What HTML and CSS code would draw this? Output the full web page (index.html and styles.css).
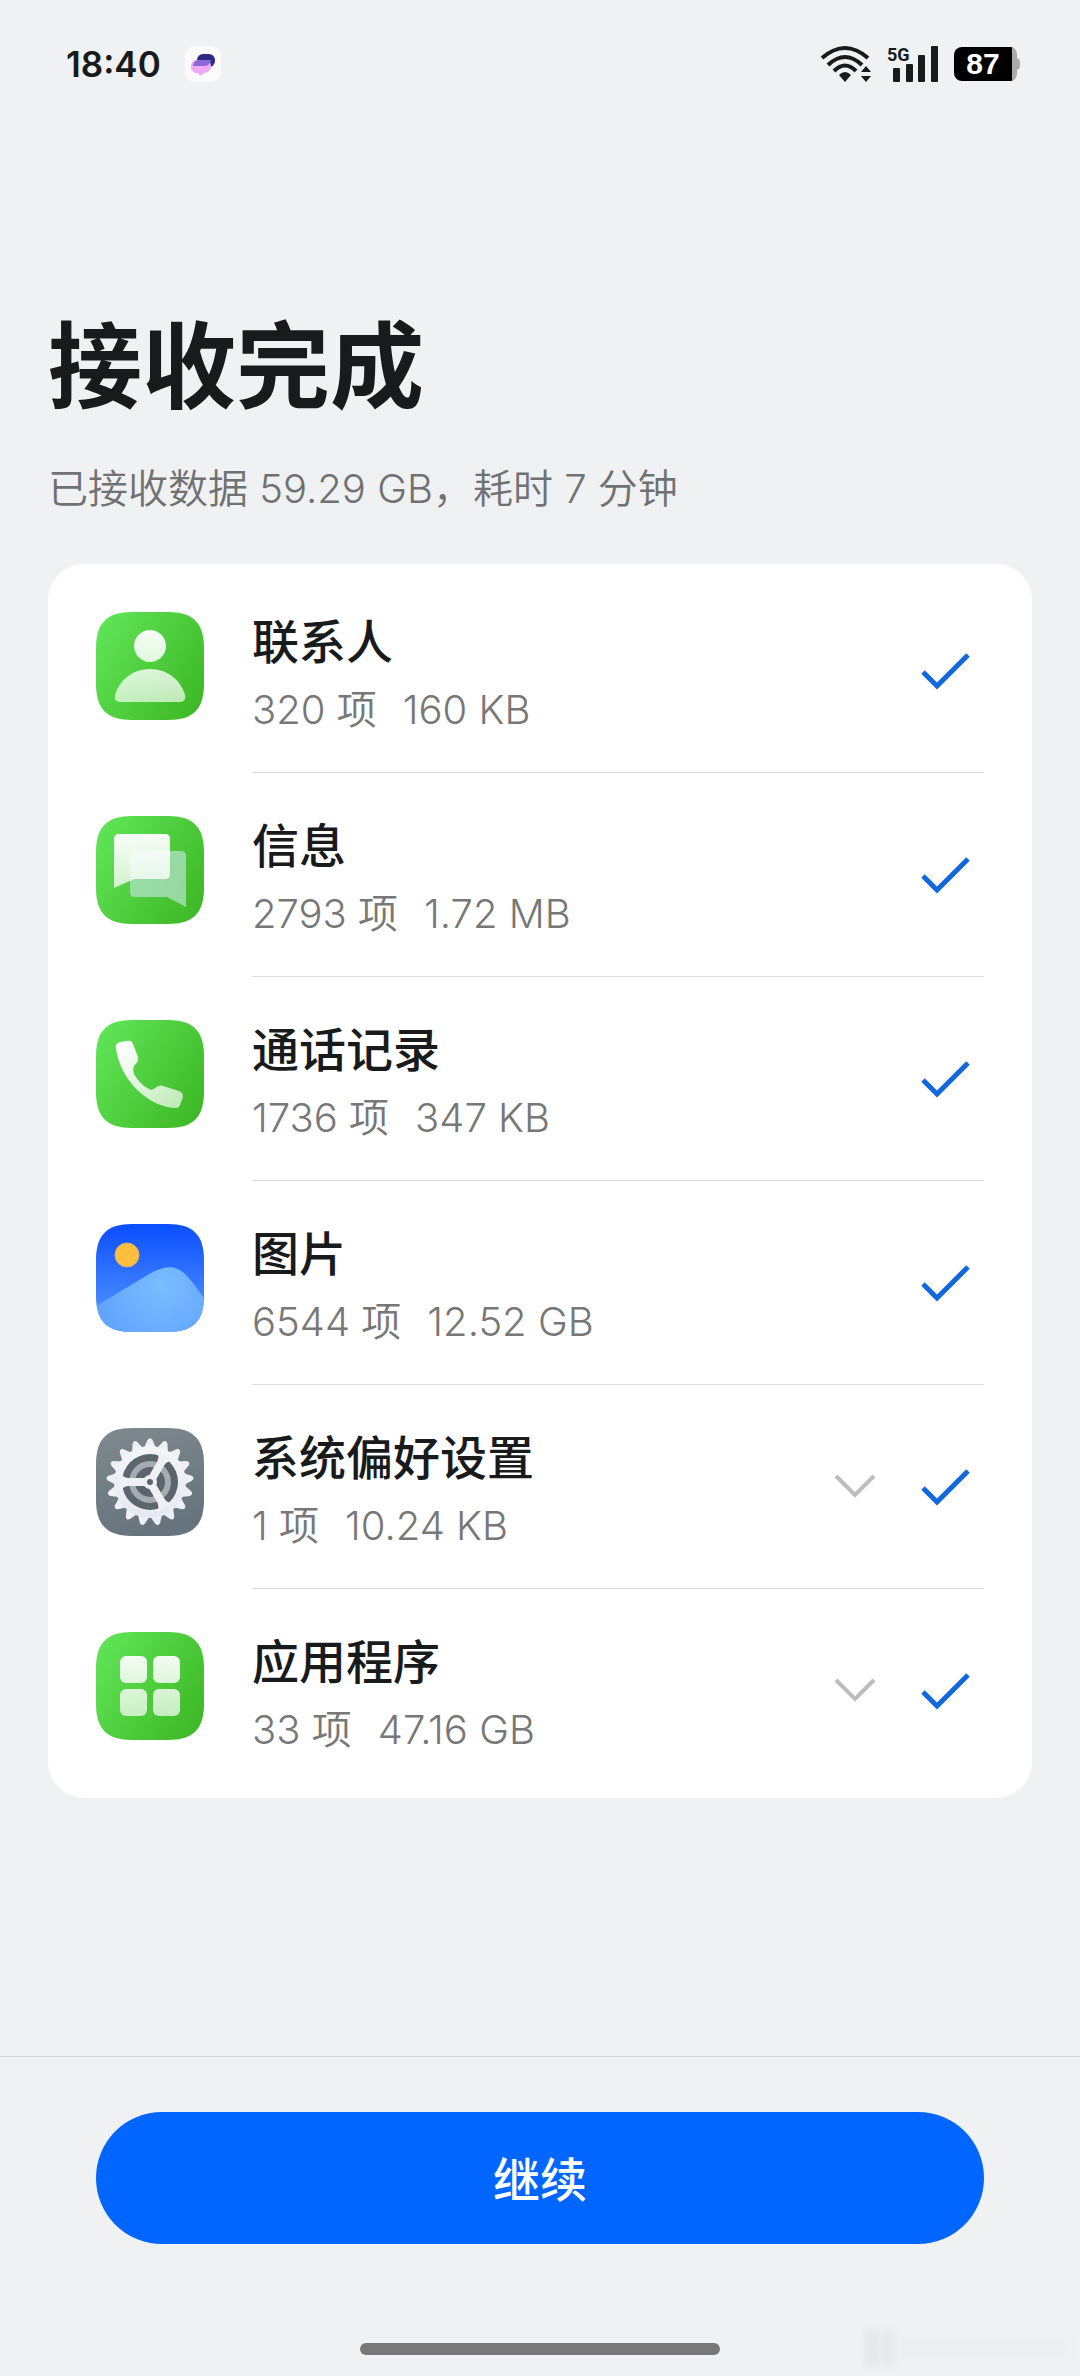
FILE: index.html
```html
<!DOCTYPE html>
<html lang="zh-CN">
<head>
  <meta charset="UTF-8" />
  <meta name="viewport" content="width=device-width, initial-scale=1.0" />
  <title>接收完成</title>
  <link rel="stylesheet" href="styles.css">
</head>
<body>
  <!-- Shared shapes and gradients -->
  <svg class="defs" width="0" height="0" aria-hidden="true">
    <defs>
      <path id="tile" d="M0 36C0 11 11 0 36 0H72C97 0 108 11 108 36V72C108 97 97 108 72 108H36C11 108 0 97 0 72Z"/>
      <clipPath id="tileClip"><use href="#tile"/></clipPath>
      <path id="tooth" d="M48 20L51.500 12Q54 8.500 56.500 12L60 20Z"/>
      <linearGradient id="green" x1="0" y1="0.200" x2="1" y2="0.800">
        <stop offset="0" stop-color="#5fe455"/>
        <stop offset="1" stop-color="#3eb826"/>
      </linearGradient>
      <linearGradient id="frost" gradientUnits="userSpaceOnUse" x1="0" y1="18" x2="0" y2="90">
        <stop offset="0" stop-color="#fff" stop-opacity="0.960"/>
        <stop offset="1" stop-color="#fff" stop-opacity="0.660"/>
      </linearGradient>
      <linearGradient id="frostDiag" gradientUnits="userSpaceOnUse" x1="26" y1="22" x2="84" y2="88">
        <stop offset="0" stop-color="#fff"/>
        <stop offset="1" stop-color="#fff" stop-opacity="0.640"/>
      </linearGradient>
      <linearGradient id="sky" x1="0" y1="0" x2="0" y2="1">
        <stop offset="0" stop-color="#0b4eff"/>
        <stop offset="1" stop-color="#5a9cff"/>
      </linearGradient>
      <radialGradient id="hill" gradientUnits="userSpaceOnUse" cx="66" cy="62" r="64">
        <stop offset="0" stop-color="#7bbdff"/>
        <stop offset="1" stop-color="#62a4ff"/>
      </radialGradient>
      <linearGradient id="slate" x1="0" y1="0" x2="0.300" y2="1">
        <stop offset="0" stop-color="#7f8a8e"/>
        <stop offset="1" stop-color="#67747d"/>
      </linearGradient>
      <linearGradient id="steel" gradientUnits="userSpaceOnUse" x1="0" y1="10" x2="0" y2="98">
        <stop offset="0" stop-color="#f6f7f9"/>
        <stop offset="1" stop-color="#e4e6f3"/>
      </linearGradient>
      <symbol id="check" viewBox="0 0 64 64">
        <path d="M11 33L25 47L56 16" fill="none" stroke="#1068dc" stroke-width="5"/>
      </symbol>
      <symbol id="chevron" viewBox="0 0 64 64">
        <path d="M12 21L31 40L50 21" fill="none" stroke="#bdbdbd" stroke-width="4"/>
      </symbol>
    </defs>
  </svg>

  <div class="status-bar">
    <div class="status-left">
      <span class="time">18:40</span>
      <svg class="app-badge" viewBox="0 0 36 36" aria-hidden="true">
        <rect width="36" height="36" rx="9" fill="#fbfbfc"/>
        <rect x="12" y="8" width="18" height="13" rx="6" fill="#2c2a84"/>
        <path d="M12 14H20C24 14 26 17 26 20C26 24 23 27 19 27L15 30L13 27C9 27 6 25 6 21C6 17 8 14 12 14Z" fill="#f0a9f5"/>
        <path d="M12 14H26C25 18 23 20 18 20H8C8 17 10 15 12 14Z" fill="#8c6ad8"/>
      </svg>
    </div>
    <div class="status-right">
      <svg class="wifi" viewBox="0 0 52 40" aria-hidden="true">
        <g fill="none" stroke="#191a1b" stroke-width="4">
          <path d="M2 14Q25 -6 48 14"/>
          <path d="M8 21Q25 5 42 21"/>
          <path d="M14 27Q25 16 36 27"/>
        </g>
        <path d="M19 31Q25 25 31 31L25 38Z" fill="#191a1b"/>
        <path d="M41 28L46 22L51 28ZM41 32H51L46 38Z" fill="#191a1b"/>
      </svg>
      <svg class="signal" viewBox="0 0 54 40" role="img" aria-label="5G">
        <text class="signal-label" x="1" y="17">5G</text>
        <g fill="#191a1b">
          <rect x="7" y="24" width="7" height="14" rx="1"/>
          <rect x="20" y="20" width="7" height="18" rx="1"/>
          <rect x="32" y="11" width="7" height="27" rx="1"/>
          <rect x="45" y="2" width="7" height="36" rx="1"/>
        </g>
      </svg>
      <div class="battery">
        <span class="battery-level">87</span>
        <svg class="battery-tip" viewBox="0 0 8 34" aria-hidden="true">
          <path d="M0 0C3 1 5 4 5 8V11C7 12 8 13 8 15V19C8 21 7 22 5 23V26C5 30 3 33 0 34Z" fill="#a9a9aa"/>
        </svg>
      </div>
    </div>
  </div>

  <main class="content">
    <h1>接收完成</h1>
    <p class="summary">已接收数据 59.29 GB，耗时 7 分钟</p>

    <ul class="card">
      <li class="item">
        <svg class="item-icon" viewBox="0 0 108 108" aria-hidden="true">
          <use href="#tile" fill="url(#green)"/>
          <circle cx="54" cy="34" r="16" fill="url(#frost)"/>
          <path d="M54 57C72 57 85 69 89 83C90 87 88 90 84 90H24C20 90 18 87 19 83C23 69 36 57 54 57Z" fill="url(#frost)"/>
        </svg>
        <div class="item-body">
          <div class="item-text">
            <h2>联系人</h2>
            <p><span>320 项</span><span>160 KB</span></p>
          </div>
          <svg class="mark" role="img" aria-label="已完成"><use href="#check"/></svg>
        </div>
      </li>

      <li class="item">
        <svg class="item-icon" viewBox="0 0 108 108" aria-hidden="true">
          <use href="#tile" fill="url(#green)"/>
          <path d="M39 35H85Q90 35 90 40V91L71 81H39Q34 81 34 76V40Q34 35 39 35Z" fill="#b8e2d2" fill-opacity="0.700"/>
          <path d="M23 18H69Q74 18 74 23V58Q74 63 69 63H38L18 72V23Q18 18 23 18Z" fill="url(#frost)"/>
        </svg>
        <div class="item-body">
          <div class="item-text">
            <h2>信息</h2>
            <p><span>2793 项</span><span>1.72 MB</span></p>
          </div>
          <svg class="mark" role="img" aria-label="已完成"><use href="#check"/></svg>
        </div>
      </li>

      <li class="item">
        <svg class="item-icon" viewBox="0 0 108 108" aria-hidden="true">
          <use href="#tile" fill="url(#green)"/>
          <path d="M20 29C19 25 21 23 24 22L31 21C34 20 36 21 37 24L42 37C43 40 41 43 38 46C37 48 37 51 38 54C42 61 47 66 53 69C55 70 57 70 59 68C62 66 64 65 67 66L83 71C86 72 87 74 87 77L84 85C83 88 81 88 78 88C50 86 24 58 20 29Z" fill="url(#frostDiag)"/>
        </svg>
        <div class="item-body">
          <div class="item-text">
            <h2>通话记录</h2>
            <p><span>1736 项</span><span>347 KB</span></p>
          </div>
          <svg class="mark" role="img" aria-label="已完成"><use href="#check"/></svg>
        </div>
      </li>

      <li class="item">
        <svg class="item-icon" viewBox="0 0 108 108" aria-hidden="true">
          <g clip-path="url(#tileClip)">
            <rect width="108" height="108" fill="url(#sky)"/>
            <circle cx="31" cy="31" r="12" fill="#ffbf3c" stroke="#d9a877" stroke-width="1"/>
            <path d="M0 82L55 49C70 41 81 41 90 51C96 57 102 66 108 74V108H0Z" fill="url(#hill)"/>
          </g>
        </svg>
        <div class="item-body">
          <div class="item-text">
            <h2>图片</h2>
            <p><span>6544 项</span><span>12.52 GB</span></p>
          </div>
          <svg class="mark" role="img" aria-label="已完成"><use href="#check"/></svg>
        </div>
      </li>

      <li class="item">
        <svg class="item-icon" viewBox="0 0 108 108" aria-hidden="true">
          <use href="#tile" fill="url(#slate)"/>
          <!-- 17 teeth, 360 / 17 degrees apart -->
          <g fill="#eff0f6">
            <use href="#tooth"/>
            <use href="#tooth" transform="rotate(21.176 54 54)"/>
            <use href="#tooth" transform="rotate(42.353 54 54)"/>
            <use href="#tooth" transform="rotate(63.529 54 54)"/>
            <use href="#tooth" transform="rotate(84.706 54 54)"/>
            <use href="#tooth" transform="rotate(105.882 54 54)"/>
            <use href="#tooth" transform="rotate(127.059 54 54)"/>
            <use href="#tooth" transform="rotate(148.235 54 54)"/>
            <use href="#tooth" transform="rotate(169.412 54 54)"/>
            <use href="#tooth" transform="rotate(190.588 54 54)"/>
            <use href="#tooth" transform="rotate(211.765 54 54)"/>
            <use href="#tooth" transform="rotate(232.941 54 54)"/>
            <use href="#tooth" transform="rotate(254.118 54 54)"/>
            <use href="#tooth" transform="rotate(275.294 54 54)"/>
            <use href="#tooth" transform="rotate(296.471 54 54)"/>
            <use href="#tooth" transform="rotate(317.647 54 54)"/>
            <use href="#tooth" transform="rotate(338.824 54 54)"/>
          </g>
          <circle cx="54" cy="54" r="36" fill="url(#steel)"/>
          <circle cx="54" cy="54" r="28" fill="#5a656c"/>
          <circle cx="54" cy="54" r="18" fill="none" stroke="#a5abb1" stroke-width="6"/>
          <g fill="#eff0f6">
            <path id="spoke" d="M54 50H34C30 50 27 49 24 45V63C27 59 30 58 34 58H54Z"/>
            <use href="#spoke" transform="rotate(120 54 54)"/>
            <use href="#spoke" transform="rotate(240 54 54)"/>
            <circle cx="54" cy="54" r="7"/>
          </g>
          <circle cx="54" cy="54" r="3" fill="#5a656c"/>
        </svg>
        <div class="item-body">
          <div class="item-text">
            <h2>系统偏好设置</h2>
            <p><span>1 项</span><span>10.24 KB</span></p>
          </div>
          <button class="expand" type="button" aria-label="展开系统偏好设置"><svg class="mark"><use href="#chevron"/></svg></button>
          <svg class="mark" role="img" aria-label="已完成"><use href="#check"/></svg>
        </div>
      </li>

      <li class="item">
        <svg class="item-icon" viewBox="0 0 108 108" aria-hidden="true">
          <use href="#tile" fill="url(#green)"/>
          <g fill="url(#frost)">
            <rect x="24" y="24" width="27" height="27" rx="6"/>
            <rect x="57" y="24" width="27" height="27" rx="6"/>
            <rect x="24" y="57" width="27" height="27" rx="6"/>
            <rect x="57" y="57" width="27" height="27" rx="6"/>
          </g>
        </svg>
        <div class="item-body">
          <div class="item-text">
            <h2>应用程序</h2>
            <p><span>33 项</span><span>47.16 GB</span></p>
          </div>
          <button class="expand" type="button" aria-label="展开应用程序"><svg class="mark"><use href="#chevron"/></svg></button>
          <svg class="mark" role="img" aria-label="已完成"><use href="#check"/></svg>
        </div>
      </li>
    </ul>
  </main>

  <footer class="footer">
    <button class="continue" type="button">继续</button>
    <div class="home-indicator"></div>
    <div class="smudge"></div>
  </footer>
</body>
</html>
```

FILE: styles.css
```css
* {
  margin: 0;
  padding: 0;
  box-sizing: border-box;
}

body {
  font-family: Inter, 'Noto Sans CJK SC', sans-serif;
  background: #eff1f3;
  color: #191a1b;
  display: flex;
  flex-direction: column;
  min-height: 100vh;
}

svg {
  display: block;
  flex: none;
}

.defs {
  position: absolute;
}

/* Status bar */
.status-bar {
  display: flex;
  align-items: center;
  justify-content: space-between;
  height: 128px;
  padding: 0 60px 0 66px;
}

.status-left,
.status-right {
  display: flex;
  align-items: center;
}

.status-left {
  gap: 24px;
}

.status-right {
  gap: 14px;
}

.time {
  font-size: 35px;
  line-height: 48px;
  font-weight: 600;
}

.app-badge {
  width: 36px;
  height: 36px;
}

.wifi {
  width: 52px;
  height: 40px;
}

.signal {
  width: 54px;
  height: 40px;
  overflow: visible;
}

.signal-label {
  font: 700 18px Roboto, sans-serif;
  fill: #191a1b;
}

.battery {
  display: flex;
}

.battery-level {
  width: 58px;
  border-radius: 8px 0 0 8px;
  background: #000;
  color: #fff;
  font: 700 30px/34px 'Liberation Sans', sans-serif;
  text-align: center;
}

.battery-tip {
  width: 8px;
  height: 34px;
}

/* Heading */
.content {
  padding: 183px 48px 48px;
}

h1 {
  font-size: 94px;
  line-height: 112px;
  font-weight: 700;
}

.summary {
  margin-top: 38px;
  font-size: 40px;
  line-height: 56px;
  font-weight: 350;
  color: #707172;
}

/* Item list */
.card {
  margin-top: 47px;
  padding: 5px 48px;
  list-style: none;
  background: #fff;
  border-radius: 36px;
}

.item {
  display: flex;
  gap: 48px;
}

.item-icon {
  width: 108px;
  height: 108px;
  margin-top: 43px;
}

.item-body {
  flex: 1;
  display: flex;
  align-items: center;
  gap: 24px;
  height: 204px;
  padding-right: 8px;
  border-bottom: 1px solid #dcdcdc;
}

.item:last-child .item-body {
  border-bottom: none;
}

.item-text {
  flex: 1;
  padding-top: 6px;
}

.item-text h2 {
  font-size: 47px;
  line-height: 64px;
  font-weight: 500;
}

.item-text p {
  display: flex;
  gap: 26px;
  margin-top: 8px;
  font-size: 40px;
  line-height: 56px;
  font-weight: 350;
  color: #777;
}

.mark {
  width: 64px;
  height: 64px;
}

.expand {
  border: none;
  background: none;
  cursor: pointer;
}

/* Footer */
.footer {
  position: relative;
  display: flex;
  flex-direction: column;
  margin-top: auto;
  padding: 55px 96px 21px;
  border-top: 1px solid #d3d5d7;
}

.continue {
  height: 132px;
  padding-bottom: 4px;
  border: none;
  border-radius: 66px;
  background: #0066ff;
  color: #fff;
  font-family: inherit;
  font-size: 47px;
  font-weight: 500;
  cursor: pointer;
}

.home-indicator {
  align-self: center;
  width: 360px;
  max-width: 100%;
  height: 12px;
  margin-top: 99px;
  border-radius: 6px;
  background: #787879;
}

/* Faint mark in the bottom right corner */
.smudge {
  position: absolute;
  right: 5px;
  bottom: 10px;
  width: 210px;
  height: 36px;
  background: linear-gradient(to right, #dfe1e3 0 12px, #ebedef 18px, #dfe1e3 20px 24px, #edeff1 32px);
  opacity: 0.6;
  filter: blur(3px);
}
```
